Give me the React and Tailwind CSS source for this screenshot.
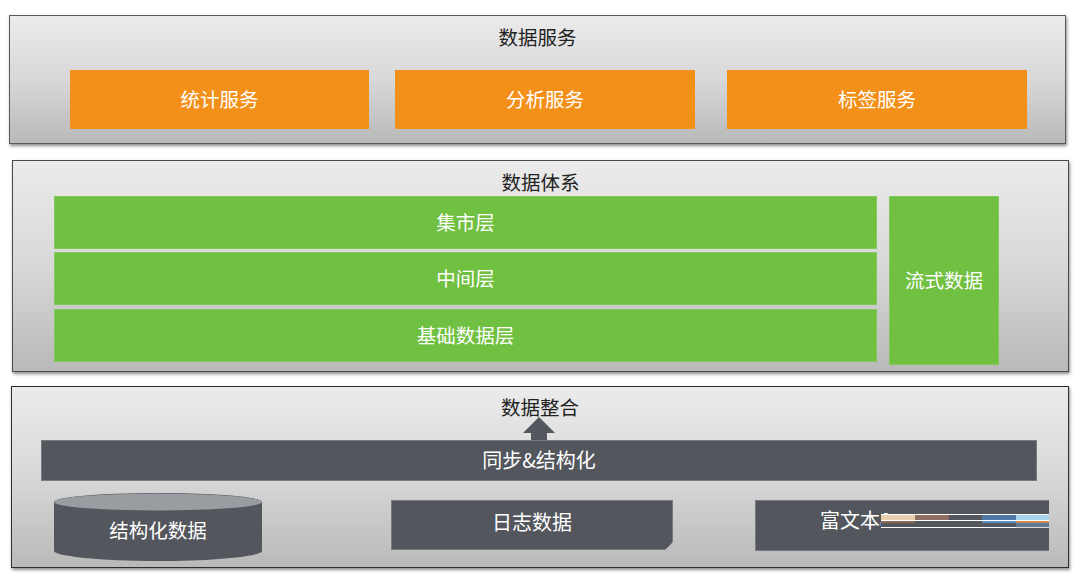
const font = { fontFamily: '"Noto Sans CJK SC", sans-serif' };

const Panel = ({ className, children }) => (
  <div
    className={`relative border bg-gradient-to-b from-[#ebebeb] via-[#d8d8d8] to-[#b9b9b9] shadow-[1px_2px_3px_rgba(0,0,0,0.45)] ${className}`}
  >
    {children}
  </div>
);

const Box = ({ className, children }) => (
  <div className={`flex items-center justify-center text-white text-[19.5px] pb-[2px] ${className}`}>
    {children}
  </div>
);

const Cylinder = () => (
  <div className="relative w-[208px] h-[68px] flex items-center justify-center text-white text-[19.5px]">
    <svg className="absolute inset-0" width="208" height="68" viewBox="0 0 208 68">
      <path d="M0 9C0 4 46 0 104 0s104 4 104 9v49c0 5-46 10-104 10S0 63 0 58z" fill="#53565c" />
      <ellipse cx="104" cy="9" rx="104" ry="8.5" fill="#999ca0" />
    </svg>
    <span className="relative mt-[6px]">结构化数据</span>
  </div>
);

const LogBox = () => (
  <div className="relative w-[282px] h-[50px] ml-[129px] mt-[7px] bg-[#53565c] border border-[#777a7e] flex items-center justify-center text-white text-[20px]">
    <span className="mb-[7px]">日志数据</span>
    <div className="absolute right-[-1px] bottom-[-1px] w-[8px] h-[8px] bg-[#bfbfbf] [clip-path:polygon(100%_0,100%_100%,0_100%)]" />
  </div>
);

// the broken picture strip lying over the last label
const stripes = [
  { w: 'w-[34px]', top: 'bg-[#e8cfae]', line: 'bg-[#8a6a50]', low: 'bg-[#53565c]', end: 'bg-white' },
  { w: 'w-[34px]', top: 'bg-[#8f6f64]', line: 'bg-[#53565c]', low: 'bg-[#53565c]', end: 'bg-white' },
  { w: 'w-[33px]', top: 'bg-[#53565c]', line: 'bg-[#53565c]', low: 'bg-[#53565c]', end: 'bg-white' },
  { w: 'w-[34px]', top: 'bg-[#4f78a8]', line: 'bg-[#5f8fc0]', low: 'bg-[#53565c]', end: 'bg-white' },
  { w: 'w-[33px]', top: 'bg-[#a9d4ee]', line: 'bg-[#c98a60]', low: 'bg-[#5c7a94]', end: 'bg-[#e4d6d6]' },
];

const RichBox = () => (
  <div className="relative w-[294px] h-[51px] ml-[82px] mt-[7px] bg-[#53565c] border border-r-0 border-[#777a7e] text-white text-[20px]">
    <span className="absolute left-[64px] top-[4px]">富文本&amp;</span>
    <div className="absolute left-[125px] top-[13px] flex">
      {stripes.map((s, i) => (
        <div key={i} className={`${s.w} flex flex-col`}>
          <div className="h-[1px] bg-white" />
          <div className={`h-[5px] ${s.top}`} />
          <div className="h-[1px] bg-white" />
          <div className={`h-[2px] ${s.line}`} />
          <div className={`h-[4px] ${s.low}`} />
          <div className={`h-[1px] ${s.end}`} />
        </div>
      ))}
    </div>
  </div>
);

export default function App() {
  return (
    <div className="w-[1080px] h-[578px] bg-white overflow-hidden flex flex-col pt-[15px]" style={font}>
      <Panel className="ml-[9px] w-[1057px] h-[129px] border-[#5a5a5a]">
        <div className="h-[54px] flex items-center justify-center text-[19.5px] text-[#222] pb-[12px]">数据服务</div>
        <div className="flex pl-[60px]">
          <Box className="w-[299px] h-[59px] bg-[#f39019]">统计服务</Box>
          <Box className="w-[300px] h-[59px] bg-[#f39019] ml-[26px]">分析服务</Box>
          <Box className="w-[300px] h-[59px] bg-[#f39019] ml-[32px]">标签服务</Box>
        </div>
      </Panel>

      <Panel className="ml-[12px] mt-[16px] w-[1057px] h-[212px] border-[#4a4a4a]">
        <div className="h-[35px] flex items-center justify-center text-[19.5px] text-[#222] pt-[6px]">数据体系</div>
        <div className="flex pl-[41px]">
          <div className="w-[823px] flex flex-col gap-[3px]">
            <Box className="h-[53px] bg-[#70c041] border border-[#82c95a]">集市层</Box>
            <Box className="h-[53px] bg-[#70c041] border border-[#82c95a]">中间层</Box>
            <Box className="h-[53px] bg-[#70c041] border border-[#82c95a] mt-[1px]">基础数据层</Box>
          </div>
          <Box className="w-[110px] h-[169px] ml-[12px] bg-[#70c041] border border-[#82c95a]">流式数据</Box>
        </div>
      </Panel>

      <Panel className="ml-[11px] mt-[14px] w-[1058px] h-[182px] border-[#2e2e2e]">
        <div className="h-[53px] flex justify-center text-[19.5px] text-[#222] pt-[5px]">数据整合</div>
        <svg className="absolute left-[511px] top-[30px]" width="32" height="23" viewBox="0 0 32 23">
          <path d="M16 0 32 16H24V23H8V16H0z" fill="#53565c" />
        </svg>
        <Box className="ml-[29px] w-[996px] h-[41px] bg-[#53565c] border border-[#777a7e] !text-[20px]">同步&amp;结构化</Box>
        <div className="flex items-start pl-[42px] mt-[12px]">
          <Cylinder />
          <LogBox />
          <RichBox />
        </div>
      </Panel>
    </div>
  );
}
